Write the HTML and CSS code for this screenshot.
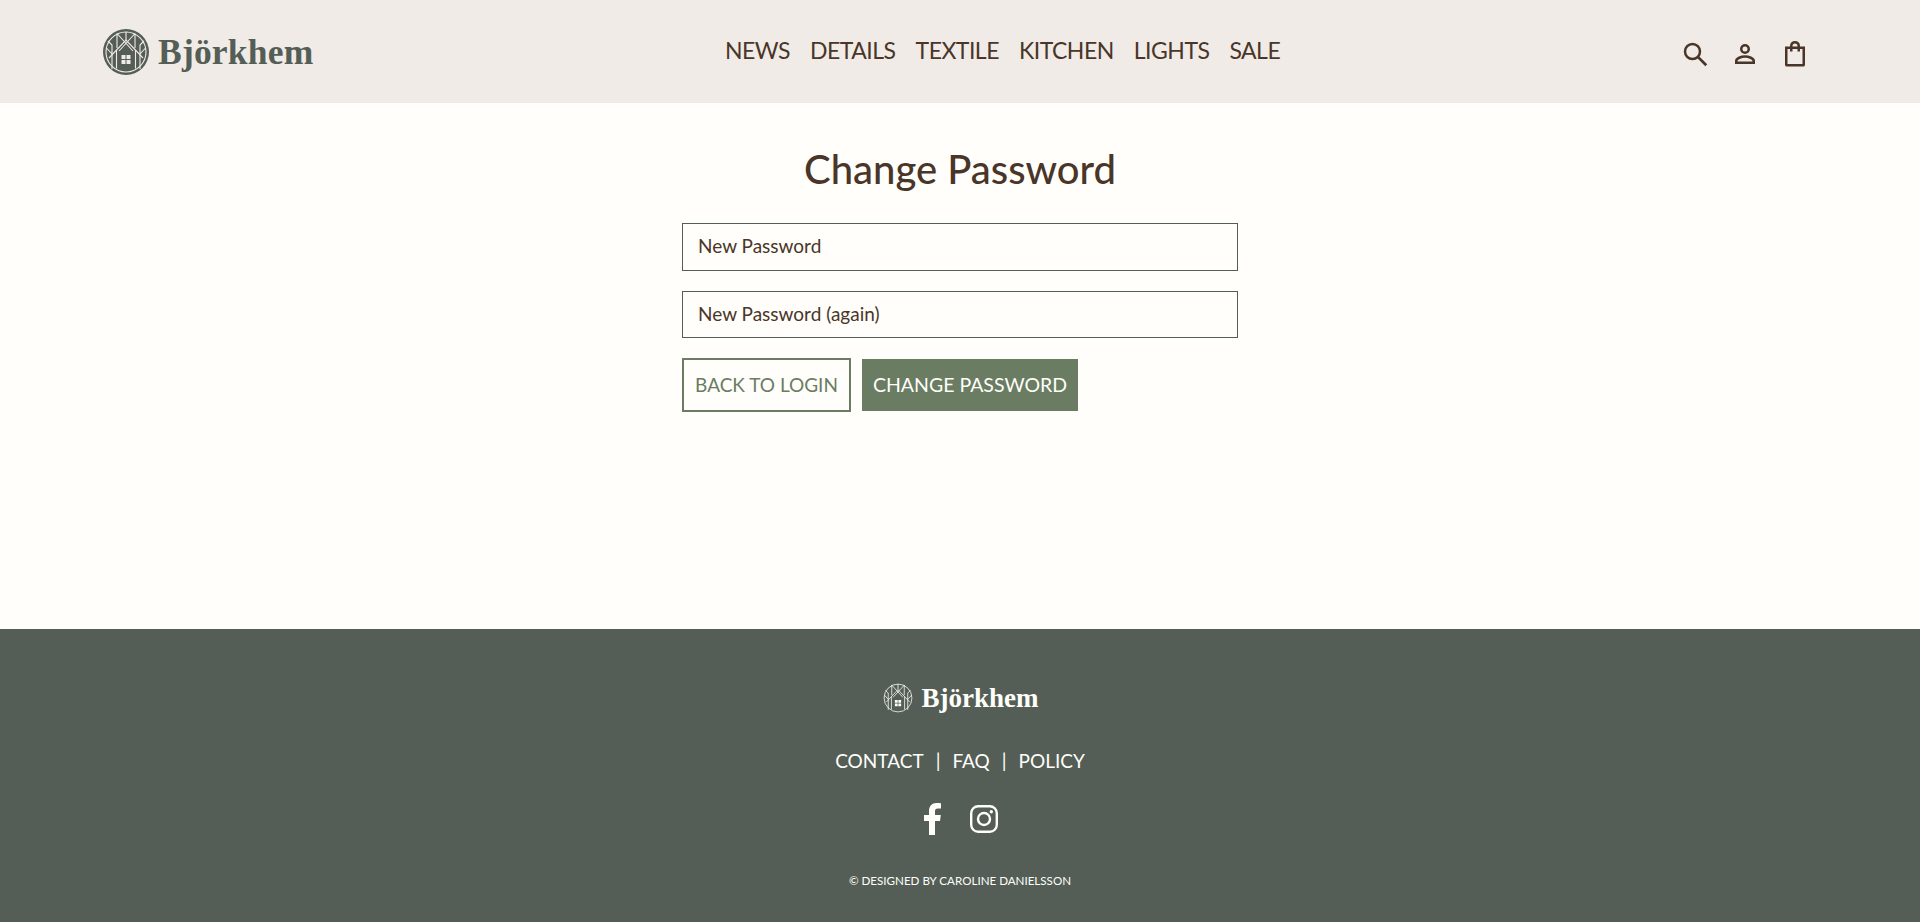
FILE: index.html

```html
<!DOCTYPE html>
<html lang="sv">
<head>
  <meta charset="UTF-8">
  <title>Change Password</title>
  <meta name="viewport" content="width=device-width, initial-scale=1.0"/>
  <link rel="stylesheet" href="styles.css">
</head>
<body>
  <svg class="defs" width="0" height="0">
    <symbol id="logo-mark" viewBox="0 0 46 46">
      <g fill="none" stroke="currentColor" stroke-width="1.100">
        <circle cx="23" cy="23" r="20"/>
        <path d="M6 29 23 11 40 29"/>
        <path d="M14 4.500 30 22M32 4.500 16 22M14 4.500V19M32 4.500V19M23 3V11"/>
        <path d="M13.500 21V39.500M32.500 21V39.500"/>
        <path d="M3.500 19 9 25M5 12 9 16V40M42.500 19 37 25M41 12 37 16V40"/>
      </g>
      <path fill="currentColor" d="M18.500 26h4v4h-4zM23.500 26h4v4h-4zM18.500 31h4v4h-4zM23.500 31h4v4h-4z"/>
    </symbol>
  </svg>

  <header class="site-header">
    <a class="brand" href="#">
      <span class="brand-disc"><svg class="brand-mark"><use href="#logo-mark"/></svg></span>
      <span class="brand-name">Björkhem</span>
    </a>
    <nav class="main-nav">
      <a href="#">NEWS</a>
      <a href="#">DETAILS</a>
      <a href="#">TEXTILE</a>
      <a href="#">KITCHEN</a>
      <a href="#">LIGHTS</a>
      <a href="#">SALE</a>
    </nav>
    <div class="header-icons">
      <svg viewBox="0 0 24 24" width="30" height="30" aria-label="Search"><circle cx="10" cy="10" r="6" fill="none" stroke="currentColor" stroke-width="2"/><path d="M14.500 14.500 21 21" fill="none" stroke="currentColor" stroke-width="2.200"/></svg>
      <svg viewBox="0 0 24 24" width="30" height="30" aria-label="Account"><circle cx="12" cy="8" r="3" fill="none" stroke="currentColor" stroke-width="2"/><path d="M5 19v-1.500c0-2 4-3.500 7-3.500s7 1.500 7 3.500V19z" fill="none" stroke="currentColor" stroke-width="2"/></svg>
      <svg viewBox="0 0 24 24" width="30" height="30" aria-label="Cart"><path d="M5 7h14v13.500a.5.5 0 0 1-.5.5h-13a.5.5 0 0 1-.5-.5z" fill="none" stroke="currentColor" stroke-width="2"/><path d="M9 10V5.500a3 3 0 0 1 6 0V10" fill="none" stroke="currentColor" stroke-width="2"/></svg>
    </div>
  </header>

  <main class="content">
    <h1>Change Password</h1>
    <form class="password-form">
      <input type="password" placeholder="New Password">
      <input type="password" placeholder="New Password (again)">
      <div class="form-actions">
        <a class="btn btn-outline" href="#">BACK TO LOGIN</a>
        <button class="btn btn-solid" type="button">CHANGE PASSWORD</button>
      </div>
    </form>
  </main>

  <footer class="site-footer">
    <a class="footer-brand" href="#">
      <svg class="footer-mark"><use href="#logo-mark"/></svg>
      <span class="footer-name">Björkhem</span>
    </a>
    <div class="footer-links">
      <a href="#">CONTACT</a><span>|</span><a href="#">FAQ</a><span>|</span><a href="#">POLICY</a>
    </div>
    <div class="social">
      <svg viewBox="0 0 20 32" width="20" height="32" aria-label="Facebook"><path fill="currentColor" d="M6 32V18H1v-6h5V8c0-5 3-8 7.500-8 2 0 3.500.2 4.500.3v5.200h-3c-2.500 0-3 1.200-3 3V12h5.800l-.8 6h-5v14z"/></svg>
      <svg viewBox="0 0 28 28" width="28" height="28" aria-label="Instagram"><rect x="1.200" y="1.200" width="25.600" height="25.600" rx="7" fill="none" stroke="currentColor" stroke-width="2.400"/><circle cx="14" cy="14" r="6" fill="none" stroke="currentColor" stroke-width="2.400"/><circle cx="21.300" cy="6.700" r="1.700" fill="currentColor"/></svg>
    </div>
    <p class="copyright">© DESIGNED BY CAROLINE DANIELSSON</p>
  </footer>
</body>
</html>
```

FILE: styles.css

```css
* {
  box-sizing: border-box;
}
html, body {
  height: 100%;
}
body {
  margin: 0;
  display: flex;
  flex-direction: column;
  background: #fffefa;
  color: #4a3529;
  font-family: 'Lato', 'Open Sans', sans-serif;
}
a {
  color: inherit;
  text-decoration: none;
}
.defs {
  position: absolute;
}

.site-header {
  height: 103px;
  flex: none;
  display: grid;
  grid-template-columns: 622px auto 1fr;
  align-items: center;
  padding: 0 112px 0 103px;
  background: #f0ebe6;
}
.brand {
  display: flex;
  align-items: center;
  gap: 9px;
  color: #545e56;
}
.brand-disc {
  width: 46px;
  height: 46px;
  border-radius: 50%;
  background: #545e56;
  color: #f0ebe6;
}
.brand-mark {
  display: block;
  width: 46px;
  height: 46px;
}
.brand-name {
  font-family: 'Liberation Serif', serif;
  font-weight: bold;
  font-size: 35.500px;
  letter-spacing: .2px;
}
.main-nav {
  display: flex;
  gap: 20px;
  font-size: 23px;
  letter-spacing: -.5px;
  margin-top: -4px;
}
.header-icons {
  display: flex;
  justify-content: flex-end;
  gap: 20px;
  padding-top: 4px;
  margin-right: -2px;
}

.content {
  flex: 1;
  display: flex;
  flex-direction: column;
  align-items: center;
  padding-top: 42px;
}
h1 {
  margin: 0 0 30px;
  font-size: 40px;
  line-height: 48px;
  font-weight: 500;
}
.password-form {
  width: 556px;
  display: flex;
  flex-direction: column;
  gap: 20px;
}
.password-form input {
  height: 47.500px;
  padding: 0 15px 2px;
  border: 1px solid #545e56;
  background: transparent;
  font-family: inherit;
  font-size: 19px;
  color: #4a3529;
}
.password-form input::placeholder {
  color: #4a3529;
  opacity: 1;
}
.form-actions {
  display: flex;
  gap: 10px;
  align-items: stretch;
}
.btn {
  height: 54px;
  display: flex;
  align-items: center;
  justify-content: center;
  padding-bottom: 2px;
  font-family: inherit;
  font-size: 19.500px;
  border: 2px solid #6a7c62;
}
.btn-outline {
  width: 169px;
  font-size: 19px;
  color: #6a7c62;
  background: transparent;
}
.btn-solid {
  width: 218px;
  color: #fffefa;
  background: #6a7c62;
  border-color: #fffefa;
  border-width: 1px;
}

.site-footer {
  height: 293px;
  flex: none;
  display: flex;
  flex-direction: column;
  align-items: center;
  padding-top: 53px;
  background: #545e56;
  color: #fffefa;
}
.footer-brand {
  display: flex;
  align-items: center;
  gap: 8px;
  height: 32px;
}
.footer-mark {
  width: 32px;
  height: 32px;
}
.footer-name {
  font-family: 'Liberation Serif', serif;
  font-weight: bold;
  font-size: 27px;
}
.footer-links {
  display: flex;
  gap: 12px;
  margin-top: 32px;
  font-size: 19px;
  line-height: 30px;
}
.social {
  display: flex;
  align-items: center;
  gap: 27px;
  margin-top: 27px;
}
.copyright {
  margin: 39px 0 0;
  font-size: 11.600px;
}
```
